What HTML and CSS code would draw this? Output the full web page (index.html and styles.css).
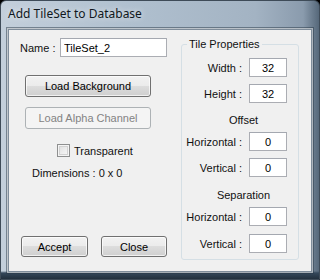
FILE: index.html
```html
<!DOCTYPE html>
<html lang="en">
<head>
    <meta charset="UTF-8">
    <title>Add TileSet to Database</title>
    <link rel="stylesheet" href="styles.css">
</head>
<body>
    <div class="window">
        <div class="titlebar">Add TileSet to Database</div>
        <div class="client">
            <div class="left">
                <div class="name-row">
                    <span class="name-label">Name :</span>
                    <input class="text name-input" value="TileSet_2">
                </div>
                <button class="btn btn-wide">Load Background</button>
                <button class="btn btn-wide btn-second" disabled>Load Alpha Channel</button>
                <label class="check"><span class="box"></span>Transparent</label>
                <div class="dims">Dimensions : 0 x 0</div>
                <div class="actions">
                    <button class="btn btn-accept">Accept</button>
                    <button class="btn btn-close">Close</button>
                </div>
            </div>
            <fieldset class="props">
                <legend>Tile Properties</legend>
                <div class="row row-first"><span>Width :</span><input class="text num" value="32"></div>
                <div class="row"><span>Height :</span><input class="text num" value="32"></div>
                <div class="heading heading-offset">Offset</div>
                <div class="row row-after"><span>Horizontal :</span><input class="text num" value="0"></div>
                <div class="row"><span>Vertical :</span><input class="text num" value="0"></div>
                <div class="heading heading-sep">Separation</div>
                <div class="row row-after"><span>Horizontal :</span><input class="text num" value="0"></div>
                <div class="row row-last"><span>Vertical :</span><input class="text num" value="0"></div>
            </fieldset>
        </div>
    </div>
</body>
</html>
```

FILE: styles.css
```css
body {
    margin: 0;
    background: #000;
    font-family: 'Liberation Sans', Arial, sans-serif;
}
.window {
    width: 320px;
    height: 280px;
    box-sizing: border-box;
    display: flex;
    flex-direction: column;
    border: 1px solid #3e4b58;
    border-radius: 6px 6px 0 0;
    background:
        linear-gradient(to bottom, rgba(40, 54, 68, 0) 270px, #34475a 272px, #1f2c38 279px),
        linear-gradient(90deg, #c3cfdb 0, #b0c0cf 40%, #a3b3c3 80%, #8a9bad 95%, #56687a 100%);
}
.titlebar {
    height: 28px;
    padding-left: 7px;
    font-family: 'Noto Sans', 'Liberation Sans', sans-serif;
    font-size: 12px;
    line-height: 26px;
    color: #101820;
    text-shadow: 0 0 6px rgba(255, 255, 255, 0.8);
}
.client {
    flex: 1;
    margin: 0 7px 7px 7px;
    display: flex;
    background: #f0f0f0;
    border: 1px solid #7f8d9b;
    box-shadow: 0 0 0 1px rgba(255, 255, 255, 0.55), 0 0 0 2px rgba(40, 55, 70, 0.5);
    font-size: 11px;
    color: #111;
}
.left {
    width: 172px;
    display: flex;
    flex-direction: column;
    align-items: flex-start;
}
.name-row {
    margin: 8px 0 0 11px;
    display: flex;
    align-items: center;
    height: 19px;
}
.name-label {
    width: 40px;
}
.text {
    box-sizing: border-box;
    height: 19px;
    margin: 0;
    border: 1px solid #abadb3;
    border-top-color: #a4a8b0;
    background: #fff;
    font-family: inherit;
    font-size: 11px;
    color: #000;
    outline: none;
}
.name-input {
    width: 107px;
    padding: 0 3px;
}
.btn {
    box-sizing: border-box;
    height: 22px;
    padding: 0;
    border: 1px solid #707070;
    border-radius: 3px;
    background: linear-gradient(to bottom, #f2f2f2 0, #ebebeb 50%, #dddddd 50%, #cfcfcf 100%);
    box-shadow: inset 0 0 0 1px rgba(255, 255, 255, 0.7);
    font-family: inherit;
    font-size: 11px;
    color: #000;
}
.btn:disabled {
    border-color: #adb2b5;
    background: #f4f4f4;
    box-shadow: none;
    color: #838383;
}
.btn-wide {
    width: 126px;
    margin: 18px 0 0 16px;
}
.btn-second {
    margin-top: 10px;
}
.check {
    margin: 15px 0 0 48px;
    display: flex;
    align-items: center;
    gap: 4px;
    height: 13px;
}
.box {
    width: 13px;
    height: 13px;
    box-sizing: border-box;
    border: 1px solid #8e8f8f;
    background: linear-gradient(135deg, #dcdcdc, #fbfbfb);
    box-shadow: inset 0 0 0 1px #f4f4f4, inset 0 0 0 2px #d2d2d2;
}
.dims {
    margin: 10px 0 0 23px;
    line-height: 13px;
}
.actions {
    margin: auto 0 14px 12px;
    display: flex;
    gap: 13px;
}
.btn-accept {
    width: 67px;
    height: 21px;
}
.btn-close {
    width: 66px;
    height: 21px;
}
.props {
    box-sizing: border-box;
    width: 118px;
    height: 222px;
    margin: 8px 0 0 0;
    padding: 0;
    border: 1px solid #d5dfe5;
    border-radius: 3px;
    min-inline-size: 0;
}
.props legend {
    margin-left: 5px;
    padding: 0 2px;
    line-height: 13px;
}
.row {
    margin-top: 7px;
    display: grid;
    grid-template-columns: 60px 38px;
    column-gap: 7px;
    align-items: center;
    height: 19px;
}
.row span {
    text-align: right;
}
.row-first {
    margin-top: 7px;
}
.row-after {
    margin-top: 5px;
}
.row-last {
    margin-top: 8px;
}
.num {
    width: 38px;
    padding: 0;
    text-align: center;
}
.heading {
    padding-left: 7px;
    text-align: center;
    line-height: 13px;
}
.heading-offset {
    margin-top: 11px;
}
.heading-sep {
    margin-top: 12px;
}
```
